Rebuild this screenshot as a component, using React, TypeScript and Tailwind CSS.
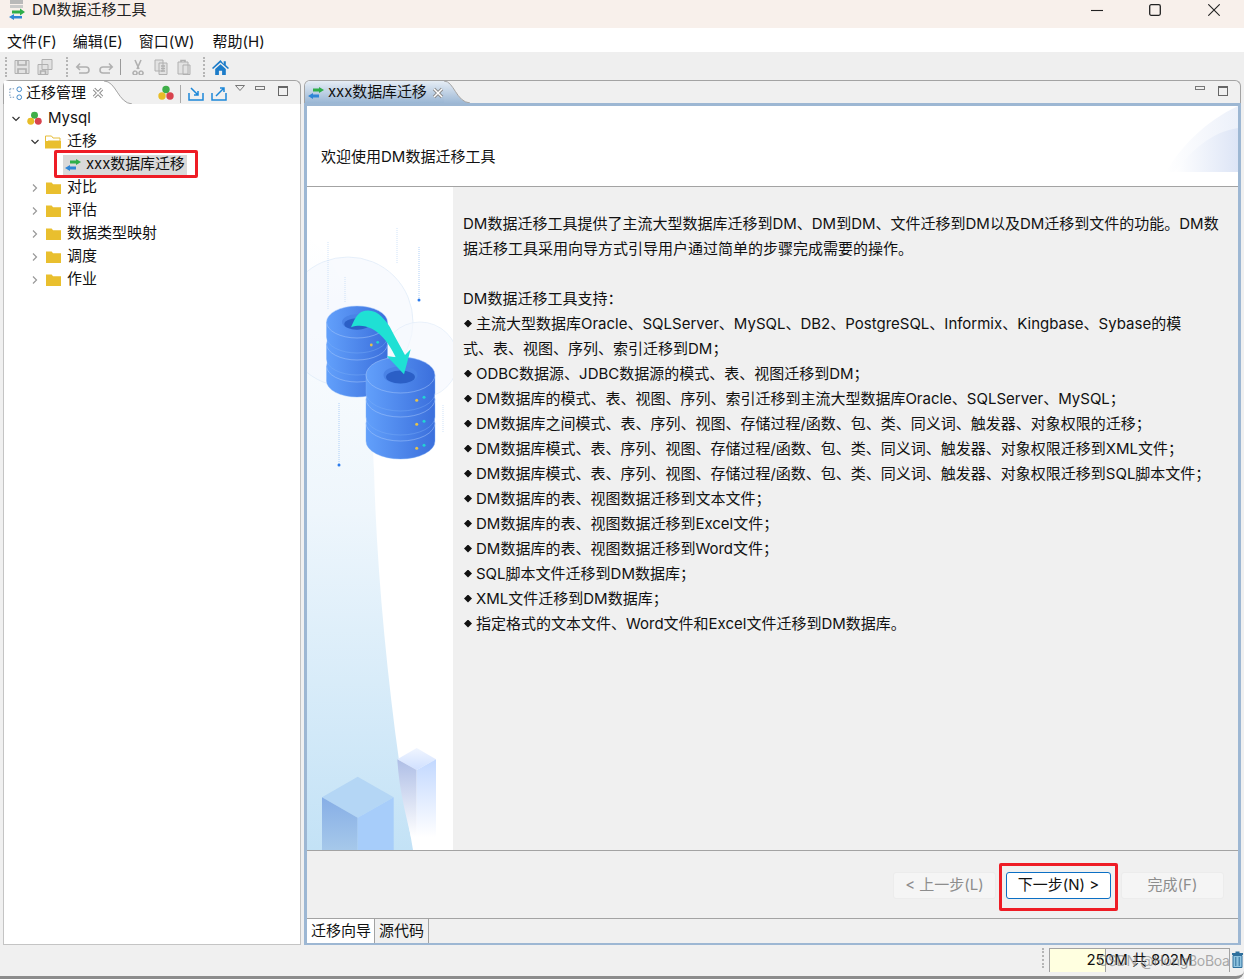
const font = "font-['Inter','Noto_Sans_CJK_SC',sans-serif]"

const bullets = [
  "主流大型数据库Oracle、SQLServer、MySQL、DB2、PostgreSQL、Informix、Kingbase、Sybase的模",
  null,
  "ODBC数据源、JDBC数据源的模式、表、视图迁移到DM；",
  "DM数据库的模式、表、视图、序列、索引迁移到主流大型数据库Oracle、SQLServer、MySQL；",
  "DM数据库之间模式、表、序列、视图、存储过程/函数、包、类、同义词、触发器、对象权限的迁移；",
  "DM数据库模式、表、序列、视图、存储过程/函数、包、类、同义词、触发器、对象权限迁移到XML文件；",
  "DM数据库模式、表、序列、视图、存储过程/函数、包、类、同义词、触发器、对象权限迁移到SQL脚本文件；",
  "DM数据库的表、视图数据迁移到文本文件；",
  "DM数据库的表、视图数据迁移到Excel文件；",
  "DM数据库的表、视图数据迁移到Word文件；",
  "SQL脚本文件迁移到DM数据库；",
  "XML文件迁移到DM数据库；",
  "指定格式的文本文件、Word文件和Excel文件迁移到DM数据库。",
]

function MigrateIcon({ className = "" }: { className?: string }) {
  return (
    <svg viewBox="0 0 16 12" className={className}>
      <path d="M5 1.500h6V0l5 3-5 3V4.500H5z" fill="#2fae4a" />
      <path d="M11 7.500H5V6L0 9l5 3v-1.500h6z" fill="#2f86d6" />
    </svg>
  )
}

function CloseIcon({ className = "" }: { className?: string }) {
  return (
    <svg viewBox="0 0 12 12" className={className}>
      <path d="M2 2l8 8M10 2l-8 8" stroke="#8a8a8a" strokeWidth="3.200" />
      <path d="M2 2l8 8M10 2l-8 8" stroke="#fff" strokeWidth="1.500" />
    </svg>
  )
}

function DbTriad({ className = "" }: { className?: string }) {
  return (
    <svg viewBox="0 0 16 16" className={className}>
      <circle cx="8" cy="4.500" r="3.700" fill="#3fae49" />
      <circle cx="4" cy="11" r="3.700" fill="#e8bd27" />
      <circle cx="12" cy="11" r="3.700" fill="#d8434e" />
    </svg>
  )
}

function Folder({ open = false }: { open?: boolean }) {
  return open ? (
    <svg viewBox="0 0 16 14" className="h-[14px] w-[16px]">
      <path d="M.5 1h6l1.500 2h7v3H3L.5 12z" fill="#fff" stroke="#e6bd3a" />
      <path d="M3 6h13v7.500H0V6z" fill="#e9bf2e" />
    </svg>
  ) : (
    <svg viewBox="0 0 16 14" className="h-[14px] w-[15px]">
      <path d="M0 1h6l1.500 2H16v10.500H0z" fill="#e9bf2e" />
    </svg>
  )
}

function Chevron({ open }: { open: boolean }) {
  return (
    <svg viewBox="0 0 8 8" className="h-2 w-2">
      <path d={open ? "M0.500 2 4 5.500 7.500 2" : "M2 0.500 5.500 4 2 7.500"} fill="none" stroke={open ? "#333" : "#999"} strokeWidth="1.200" />
    </svg>
  )
}

function Grip() {
  return <div className="h-[20px] w-[2px] border-l-2 border-dotted border-[#b5b5b5]" />
}

function ToolIcon({ d, body }: { d?: string; body?: string }) {
  return (
    <svg viewBox="0 0 16 16" className="h-4 w-4">
      {body && <path d={body} fill="#e2e2e2" stroke="#b0b0b0" />}
      {d && <path d={d} fill="none" stroke="#b0b0b0" strokeWidth="1.600" />}
    </svg>
  )
}

function Toolbar() {
  return (
    <div className="flex h-[28px] items-center bg-[#efefef] pl-[5px] pt-[2px]">
      <Grip />
      <div className="ml-[7px] flex gap-[7px]">
        <ToolIcon body="M1 1.500h14v13H1z" d="M4 2v4h8V2M4 14v-4h8v4" />
        <ToolIcon body="M5 .500h10v10H5zM1 5.500h10v10H1z" d="M3.500 15v-3h5v3" />
      </div>
      <div className="ml-[13px]"><Grip /></div>
      <div className="ml-[7px] flex gap-[7px]">
        <ToolIcon d="M2 8h9a3 3 0 0 1 0 6H4M5 4.500 1.800 8 5 11" />
        <ToolIcon d="M14 8H5a3 3 0 0 0 0 6h7M11 4.500 14.200 8 11 11" />
      </div>
      <div className="ml-[6px] h-[16px] w-px bg-[#9a9a9a]" />
      <div className="ml-[9px] flex gap-[7px]">
        <ToolIcon d="M5 1l4 9M11 1 7 10M5 12a2 2 0 1 0 .100 0M11 12a2 2 0 1 0 .100 0" />
        <ToolIcon body="M2 1h8v11H2zM6 4h8v11.500H6z" d="M8 7h4M8 9.500h4M8 12h4" />
        <ToolIcon body="M2 3h10v12H2zM7 6h7v9.500H7z" d="M5 3V1.500h4V3" />
      </div>
      <div className="ml-[11px]"><Grip /></div>
      <svg viewBox="0 0 16 16" className="ml-[7px] h-[17px] w-[17px]">
        <path d="M8 1 0 8.500l1 1L8 3.200l7 6.300 1-1-3-2.800V2h-2v2.800z" fill="#1c7cc9" />
        <path d="M3 9.500 8 5l5 4.500V15H9.500v-4h-3v4H3z" fill="#1c7cc9" />
      </svg>
    </div>
  )
}

function TreeRow({ indent, open, icon, label }: { indent: number; open?: boolean; icon: React.ReactNode; label: string }) {
  return (
    <div className="flex h-[23px] items-center" style={{ paddingLeft: indent }}>
      <span className="flex w-[13px] justify-center"><Chevron open={!!open} /></span>
      <span className="ml-[4px] flex w-[16px] justify-center">{icon}</span>
      <span className="ml-[6px] text-[15px] text-[#111]">{label}</span>
    </div>
  )
}

function LeftPanel() {
  return (
    <div className="flex w-[298px] flex-col">
      <div className="flex h-[24px] rounded-t-[6px] border-x border-t border-[#a3a3a3] bg-[#f0f0f0]">
        <div className="flex items-center bg-white pl-[4px] pt-[1px]">
          <svg viewBox="0 0 16 16" className="h-[15px] w-[15px]">
            <path d="M2 3v9h6M2 3h6" fill="none" stroke="#6a8fb5" strokeDasharray="1.500 1.500" />
            <circle cx="12" cy="3.500" r="2.500" fill="none" stroke="#3d85c6" />
            <circle cx="12" cy="12" r="2.500" fill="none" stroke="#3d85c6" />
          </svg>
          <span className="ml-[3px] text-[15px] text-[#111]">迁移管理</span>
          <CloseIcon className="ml-[6px] h-[12px] w-[12px]" />
        </div>
        <svg viewBox="0 0 28 24" className="h-[24px] w-[28px]">
          <path d="M0 0C12 0 14 22 28 23V24H0z" fill="#fff" />
          <path d="M0 0C12 0 14 22 28 23" fill="none" stroke="#a3a3a3" />
        </svg>
        <div className="flex flex-1 items-start justify-end pt-[4px] pr-[12px]">
          <DbTriad className="h-[16px] w-[16px]" />
          <div className="ml-[6px] h-[18px] w-px bg-[#aaa]" />
          <svg viewBox="0 0 16 14" className="ml-[7px] mt-[2px] h-[14px] w-[16px]">
            <path d="M1 6v7h14V6M3 1l7 7M10 4v4H6" fill="none" stroke="#1c87d8" strokeWidth="1.500" />
          </svg>
          <svg viewBox="0 0 16 14" className="ml-[7px] mt-[2px] h-[14px] w-[16px]">
            <path d="M1 6v7h14V6M5 9l8-8M9 1h4v4" fill="none" stroke="#1c87d8" strokeWidth="1.500" />
          </svg>
          <svg viewBox="0 0 10 6" className="ml-[8px] h-[6px] w-[10px]">
            <path d="M.500.500h9L5 5.500z" fill="none" stroke="#777" />
          </svg>
          <div className="ml-[10px] mt-[1px] h-[4px] w-[10px] border border-[#777]" />
          <div className="ml-[13px] mt-[1px] h-[10px] w-[10px] border border-t-2 border-[#666]" />
        </div>
      </div>
      <div className="flex-1 border-x border-b border-[#c4c4c4] bg-white pt-[3px]">
        <TreeRow indent={5} open icon={<DbTriad className="h-[15px] w-[15px]" />} label="Mysql" />
        <TreeRow indent={24} open icon={<Folder open />} label="迁移" />
        <div className="relative flex h-[23px] items-center pl-[59px]">
          <div className="flex h-[20px] items-center bg-[#d9d9d9] pl-[2px] pr-[2px]">
            <MigrateIcon className="h-[12px] w-[16px]" />
            <span className="ml-[5px] text-[15px] tracking-[-0.1px] text-[#111]">xxx数据库迁移</span>
          </div>
          <div className="absolute left-[50px] top-[-3px] h-[28px] w-[144px] rounded-[2px] border-[3px] border-[#ee1c25]" />
        </div>
        {["对比", "评估", "数据类型映射", "调度", "作业"].map((t) => (
          <TreeRow key={t} indent={24} icon={<Folder />} label={t} />
        ))}
      </div>
    </div>
  )
}

function disc(cx: number, y: number, rx: number, ry: number, h: number, key: string) {
  return (
    <g key={key}>
      <path d={`M${cx - rx} ${y}v${h}a${rx} ${ry} 0 0 0 ${rx * 2} 0v-${h}z`} fill="url(#side)" stroke="#7fb0f8" strokeWidth=".4" />
      <ellipse cx={cx} cy={y} rx={rx} ry={ry} fill="url(#side)" stroke="#a9c9fb" strokeWidth=".5" />
    </g>
  )
}

function Stack({ cx, y, rx, ry, h, step, hole }: { cx: number; y: number; rx: number; ry: number; h: number; step: number; hole: number }) {
  return (
    <g>
      <path d={`M${cx - rx + 1} ${y}v${step * 2}a${rx} ${ry} 0 0 0 ${rx * 2 - 2} 0v-${step * 2}z`} fill="#2d60c6" />
      {[2, 1, 0].map((i) => disc(cx, y + i * step, rx, ry, h, `d${i}`))}
      <ellipse cx={cx} cy={y} rx={hole} ry={hole * 0.52} fill="#4a83e6" />
      <ellipse cx={cx} cy={y + 2} rx={hole * 0.85} ry={hole * 0.38} fill="#2b5fc6" />
    </g>
  )
}

function Illustration() {
  return (
    <svg viewBox="0 0 146 663" className="h-[663px] w-[146px] shrink-0 bg-white">
      <defs>
        <linearGradient id="blob" x1="0" y1="0" x2="0" y2="1">
          <stop offset="0" stopColor="#ffffff" />
          <stop offset="0.45" stopColor="#eef6fc" />
          <stop offset="1" stopColor="#c3e2f6" />
        </linearGradient>
        <linearGradient id="side" x1="0" y1="0" x2="1" y2="0">
          <stop offset="0" stopColor="#62a0fb" />
          <stop offset="1" stopColor="#3b6fdc" />
        </linearGradient>
        <linearGradient id="cubeL" x1="0" y1="0" x2="0" y2="1">
          <stop offset="0" stopColor="#86aee6" />
          <stop offset="1" stopColor="#a6c8ea" />
        </linearGradient>
        <linearGradient id="tallL" x1="0" y1="0" x2="0" y2="1">
          <stop offset="0" stopColor="#aebee6" />
          <stop offset="1" stopColor="#ffffff" />
        </linearGradient>
        <linearGradient id="tallR" x1="0" y1="0" x2="0" y2="1">
          <stop offset="0" stopColor="#c2d8ff" />
          <stop offset="1" stopColor="#ffffff" />
        </linearGradient>
        <linearGradient id="tallT" x1="0" y1="0" x2="0" y2="1">
          <stop offset="0" stopColor="#f0f5ff" />
          <stop offset="1" stopColor="#d0e0ff" />
        </linearGradient>
      </defs>
      <path d="M0 50C50 80 65 200 67 283C70 400 85 543 106 663H0z" fill="url(#blob)" />
      <circle cx="41" cy="135" r="65" fill="#f3f7fd" fillOpacity=".6" stroke="#dde9f8" strokeWidth=".7" />
      <circle cx="113" cy="173" r="38" fill="#f5f8fd" fillOpacity=".7" stroke="#e3edf9" strokeWidth=".7" />
      <g stroke="#c5dcf6" strokeWidth=".8" strokeDasharray="1 1">
        <path d="M21 55v68M38 90v25M90 41v35M136 218v28" />
        <path d="M112 60v53M32 216v62" stroke="#9cc4f5" />
      </g>
      <circle cx="112" cy="113" r="1.500" fill="#2b7bec" />
      <circle cx="32" cy="278" r="1.500" fill="#2b7bec" />
      <Stack cx={50} y={135} rx={30.5} ry={16} h={15} step={22} hole={15} />
      <circle cx="64.300" cy="158" r="1.400" fill="#e6c24a" />
      <circle cx="70.700" cy="155.300" r="1.400" fill="#22d3d3" />
      <Stack cx={93.5} y={188} rx={34.5} ry={18} h={18} step={24} hole={17} />
      {[0, 1, 2].map((i) => (
        <g key={i}>
          <circle cx="109.700" cy={213.3 + i * 24} r="1.500" fill="#e6c24a" />
          <circle cx="117" cy={210.3 + i * 24} r="1.500" fill="#22d3d3" />
        </g>
      ))}
      <path d="M44 140.300C47 133 50 127 54.700 124.700C62 122 69 124 74.700 129.700C82 137 84 142 88 149.700L98 168L103.700 162.300L97 187.300L79.700 169L88.700 170.300C81 153 64.700 133 44 140.300z" fill="#1fe0d4" />
      <path d="M50.700 589.700 86.700 610.300 50.700 630.700 15 610.300z" fill="#b4d6f5" />
      <path d="M15 610.300 50.700 630.700V663H15z" fill="url(#cubeL)" />
      <path d="M86.700 610.300 50.700 630.700V663H86.700z" fill="#a7cdfa" />
      <path d="M109.700 561 129 572.300 109.700 583 90.300 572.300z" fill="url(#tallT)" />
      <path d="M90.300 572.300 109.700 583V650H104C97 620 92 600 90.300 572.300z" fill="url(#tallL)" />
      <path d="M129 572.300 109.700 583V650H129z" fill="url(#tallR)" />
    </svg>
  )
}

function WizardBtn({ label, active }: { label: string; active?: boolean }) {
  return (
    <div
      className={
        active
          ? "flex h-[27px] w-[105px] items-center justify-center rounded-[3px] border border-[#0b6fc4] bg-white text-[15px] text-[#111]"
          : "flex h-[27px] w-[103px] items-center justify-center rounded-[3px] border border-[#ececec] bg-[#f5f5f5] text-[15px] text-[#8d8d8d]"
      }
    >
      {label}
    </div>
  )
}

function RightPanel() {
  return (
    <div className="flex flex-1 flex-col">
      <div className="flex h-[23px] rounded-t-[6px] border-x border-t border-[#a3a3a3] bg-[#f0f0f0]">
        <div className="flex items-center rounded-tl-[5px] bg-gradient-to-b from-[#e6edf5] to-[#9ab6d4] pl-[3px] pt-[1px]">
          <MigrateIcon className="h-[12px] w-[16px]" />
          <span className="ml-[4px] text-[15px] tracking-[-0.1px] text-[#111]">xxx数据库迁移</span>
          <CloseIcon className="ml-[5px] h-[12px] w-[12px]" />
        </div>
        <svg viewBox="0 0 26 23" className="h-[23px] w-[26px]">
          <defs>
            <linearGradient id="tabg" x1="0" y1="0" x2="0" y2="1">
              <stop offset="0" stopColor="#e6edf5" />
              <stop offset="1" stopColor="#9ab6d4" />
            </linearGradient>
          </defs>
          <path d="M0 0C10 0 12 21 26 22V23H0z" fill="url(#tabg)" />
          <path d="M0 0C10 0 12 21 26 22" fill="none" stroke="#a3a3a3" />
        </svg>
        <div className="flex flex-1 items-start justify-end gap-[13px] pr-[12px] pt-[5px]">
          <div className="h-[4px] w-[10px] border border-[#777]" />
          <div className="h-[10px] w-[10px] border border-t-2 border-[#666]" />
        </div>
      </div>
      <div className="flex flex-1 flex-col border-[3px] border-[#9db7d3] bg-white">
        <div className="relative h-[81px] border-b border-[#a3a3a3] pl-[14px] pt-[40px] text-[15px] leading-[22px] text-[#111]">
          欢迎使用DM数据迁移工具
          <svg viewBox="0 0 72 66" className="absolute right-0 top-0 h-[66px] w-[72px]">
            <defs>
              <linearGradient id="corner" x1="0" y1="0" x2="1" y2="0">
                <stop offset="0" stopColor="#ffffff" />
                <stop offset="1" stopColor="#dde5f6" />
              </linearGradient>
            </defs>
            <path d="M0 66C15 40 40 15 72 0V66z" fill="url(#corner)" fillOpacity=".55" />
            <path d="M8 66C25 45 45 26 72 22V66z" fill="url(#corner)" />
          </svg>
        </div>
        <div className="flex h-[664px] border-b border-[#a3a3a3] bg-[#f0f0f0]">
          <Illustration />
          <div className="pl-[10px] pt-[24px] text-[15px] leading-[25px] text-[#111]">
            <div className="whitespace-nowrap">DM数据迁移工具提供了主流大型数据库迁移到DM、DM到DM、文件迁移到DM以及DM迁移到文件的功能。DM数</div>
            <div className="whitespace-nowrap">据迁移工具采用向导方式引导用户通过简单的步骤完成需要的操作。</div>
            <div className="mt-[25px]">DM数据迁移工具支持：</div>
            {bullets.map((b, i) =>
              b === null ? (
                <div key={i}>式、表、视图、序列、索引迁移到DM；</div>
              ) : (
                <div key={i} className="flex items-center whitespace-nowrap">
                  <span className="ml-[1px] mr-[4px] h-[8px] w-[8px] bg-[#111] [clip-path:polygon(50%_0,100%_50%,50%_100%,0_50%)]" />
                  {b}
                </div>
              ),
            )}
          </div>
        </div>
        <div className="flex h-[68px] items-center justify-end gap-[10px] border-b border-[#a3a3a3] bg-[#f0f0f0] pr-[14px] pt-[2px]">
          <WizardBtn label="< 上一步(L)" />
          <div className="relative">
            <WizardBtn label="下一步(N) >" active />
            <div className="absolute left-[-7px] top-[-9px] h-[48px] w-[119px] rounded-[2px] border-[3px] border-[#ee1c25]" />
          </div>
          <WizardBtn label="完成(F)" />
        </div>
        <div className="flex flex-1 bg-[#f0f0f0] text-[15px] leading-[24px] text-[#111]">
          <div className="w-[67px] bg-white pl-[4px]">迁移向导</div>
          <div className="w-[55px] border-x border-[#a3a3a3] pl-[4px]">源代码</div>
        </div>
      </div>
    </div>
  )
}

function StatusBar() {
  return (
    <div className="flex h-[34px] justify-end rounded-br-[8px] border-b-[3px] border-[#8c8c8c] bg-[#f0f0f0] pt-[3px]">
      <div className="mr-[5px]"><Grip /></div>
      <div className="relative flex h-[24px] w-[181px] items-center justify-center overflow-hidden border-x border-t border-[#a3a3a3] text-[15px] text-[#111]">
        <div className="absolute inset-y-0 left-0 w-[56px] border-r border-[#a3a3a3] bg-[#ffffe0]" />
        <span className="relative">250M 共 802M</span>
        <span className="absolute left-[48px] top-[1px] whitespace-nowrap text-[14px] tracking-[-0.3px] text-[#888]/70">CSDN @HongBoBoa</span>
      </div>
      <div className="flex w-[14px] justify-center pt-[3px]">
        <svg viewBox="0 0 13 17" className="h-[17px] w-[13px] shrink-0">
          <path d="M1 2h11v2H1zM4.500 2V.500h4V2" fill="#2f6f9c" />
          <path d="M2 4.500h9V16.500H2z" fill="#8fc3df" stroke="#2f6f9c" />
          <path d="M4.800 6v9M8.200 6v9" stroke="#2f6f9c" />
        </svg>
      </div>
    </div>
  )
}

export default function App() {
  return (
    <div className={`flex h-[979px] w-[1244px] flex-col overflow-hidden bg-[#f0f0f0] ${font}`}>
      <div className="flex h-[28px] items-center bg-[#f8f0eb] pb-[8px] pl-[8px]">
        <svg viewBox="0 0 18 20" className="h-[20px] w-[18px]">
          <rect x="2" y="0" width="13" height="4" fill="#b9b9b9" />
          <rect x="2" y="5" width="13" height="3" fill="#c9c9c9" />
          <path d="M4 10.500h8V8.500l5 3.500-5 3.500v-2H4z" fill="#2fae4a" />
          <path d="M14 16H6v-2L1 17l5 3v-1.500h8z" fill="#2f86d6" />
        </svg>
        <span className="ml-[6px] text-[15px] text-[#222]">DM数据迁移工具</span>
        <div className="ml-auto flex items-center pr-[24px] text-[#222]">
          <svg viewBox="0 0 12 12" className="h-[12px] w-[12px]">
            <path d="M0 6.500h12" stroke="currentColor" strokeWidth="1.100" />
          </svg>
          <svg viewBox="0 0 12 12" className="ml-[46px] h-[12px] w-[12px]">
            <rect x=".700" y=".700" width="10.600" height="10.600" rx="1.500" fill="none" stroke="currentColor" strokeWidth="1.300" />
          </svg>
          <svg viewBox="0 0 12 12" className="ml-[47px] h-[12px] w-[12px]">
            <path d="M.300.300l11.400 11.400M11.700.300.300 11.700" stroke="currentColor" strokeWidth="1.100" />
          </svg>
        </div>
      </div>
      <div className="flex h-[24px] items-center gap-[16px] bg-white pl-[7px] pt-[5px] text-[15px] text-[#111]">
        <span>文件(F)</span>
        <span>编辑(E)</span>
        <span>窗口(W)</span>
        <span className="ml-[2px]">帮助(H)</span>
      </div>
      <Toolbar />
      <div className="flex h-[865px] gap-[3px] px-[3px]">
        <LeftPanel />
        <RightPanel />
      </div>
      <StatusBar />
    </div>
  )
}
